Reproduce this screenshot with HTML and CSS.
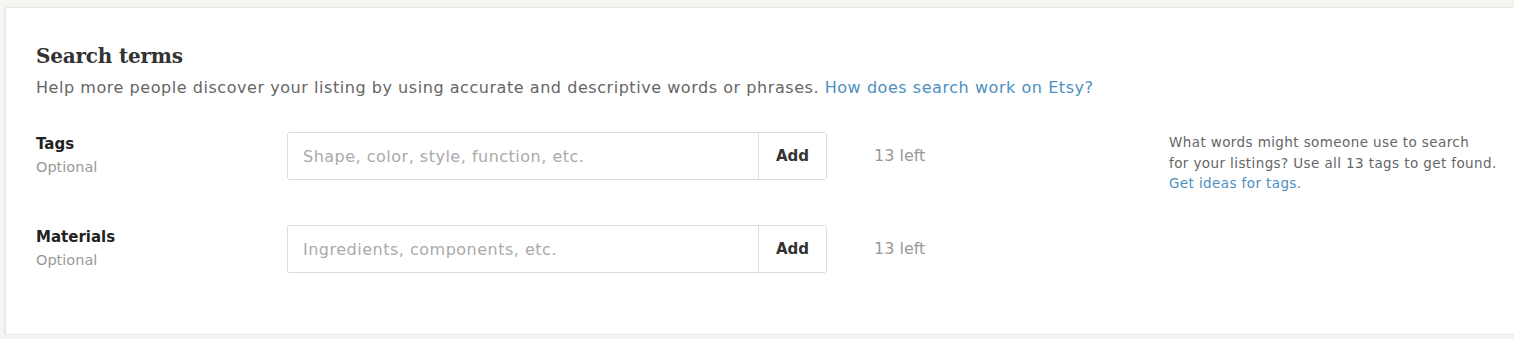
FILE: index.html
```html
<!DOCTYPE html>
<html lang="en">
<head>
  <meta charset="UTF-8" />
  <title>Search terms</title>
  <link rel="stylesheet" href="styles.css">
</head>
<body>

  <section class="panel">
    <h2 class="panel-title">Search terms</h2>
    <p class="panel-intro">
      Help more people discover your listing by using accurate and descriptive words or phrases.
      <a href="#" class="link">How does search work on Etsy?</a>
    </p>

    <div class="field">
      <div class="field-label">
        <label for="tags">Tags</label>
        <span class="optional">Optional</span>
      </div>
      <div class="input-group">
        <input type="text" id="tags" class="text-input" placeholder="Shape, color, style, function, etc." />
        <button class="add-btn">Add</button>
      </div>
      <div class="count">13 left</div>
      <p class="help">
        What words might someone use to search<br>
        for your listings? Use all 13 tags to get found.
        <a href="#" class="link help-link">Get ideas for tags.</a>
      </p>
    </div>

    <div class="field">
      <div class="field-label">
        <label for="materials">Materials</label>
        <span class="optional">Optional</span>
      </div>
      <div class="input-group">
        <input type="text" id="materials" class="text-input" placeholder="Ingredients, components, etc." />
        <button class="add-btn">Add</button>
      </div>
      <div class="count">13 left</div>
    </div>
  </section>

</body>
</html>
```

FILE: styles.css
```css
/* ===== Palette ===== */
:root {
  --page-bg: #f5f5f1;
  --card-bg: #ffffff;
  --line: #dcdcd8;
  --text-dark: #222222;
  --text-mid: #666666;
  --text-light: #999999;
  --placeholder: #aaaaaa;
  --link: #4d8fc0;
}

*, *::before, *::after { box-sizing: border-box; margin: 0; padding: 0; }

body {
  background: var(--page-bg);
  font-family: 'DejaVu Sans', Verdana, sans-serif;
  color: var(--text-dark);
  overflow: hidden;
}

/* Card */
.panel {
  margin: 7px 0 0 5px;
  height: 328px;
  background: var(--card-bg);
  border: 1px solid #e8e8e4;
  border-right: 0;
  box-shadow: 0 1px 2px rgba(0, 0, 0, 0.12);
  padding: 35px 0 0 30px;
}

.panel-title {
  font-family: 'DejaVu Serif', Georgia, serif;
  font-size: 20px;
  font-weight: 700;
  line-height: 26px;
  color: #333333;
  letter-spacing: -0.2px;
}

.panel-intro {
  margin-top: 8px;
  font-size: 16px;
  letter-spacing: 0.55px;
  line-height: 22px;
  color: var(--text-mid);
}

.link { color: var(--link); text-decoration: none; }

/* Rows */
.field {
  display: grid;
  grid-template-columns: 251px 540px 342px 1fr;
  align-items: start;
  margin-top: 33px;
}
.field + .field { margin-top: 31.5px; }

.field-label {
  display: flex;
  flex-direction: column;
  padding-top: 2px;
}
.field-label label {
  font-size: 15px;
  font-weight: 700;
  line-height: 20px;
  color: var(--text-dark);
}
.optional {
  font-size: 14.5px;
  line-height: 27px;
  color: var(--text-light);
}

.input-group {
  display: flex;
  height: 48px;
  border: 1px solid var(--line);
  border-radius: 3px;
  overflow: hidden;
}
.text-input {
  flex: 1;
  border: 0;
  padding: 0 15px;
  font-family: inherit;
  font-size: 16px;
  letter-spacing: 0.5px;
  color: var(--text-dark);
  outline: none;
}
.text-input::placeholder { color: var(--placeholder); }

.add-btn {
  width: 68px;
  border: 0;
  border-left: 1px solid var(--line);
  background: var(--card-bg);
  font-family: inherit;
  font-size: 15px;
  font-weight: 700;
  color: #333333;
}

.count {
  padding: 14px 0 0 47px;
  font-size: 16px;
  color: var(--text-light);
}

.help {
  font-size: 13.5px;
  letter-spacing: 0.4px;
  line-height: 20.5px;
  color: var(--text-mid);
  white-space: nowrap;
}
.help-link { display: block; }
```
